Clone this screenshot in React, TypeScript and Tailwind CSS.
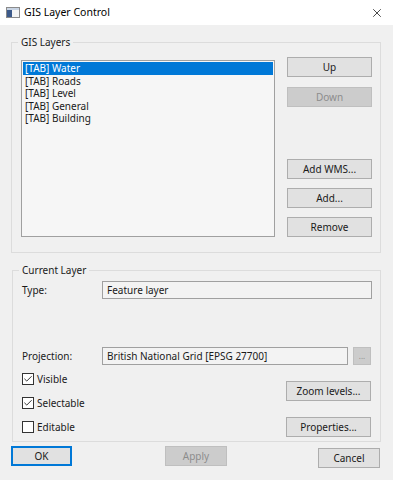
import { X, Check } from 'lucide-react'

const layers = ['[TAB] Water', '[TAB] Roads', '[TAB] Level', '[TAB] General', '[TAB] Building']

function Btn({ label, disabled, className = '' }: { label: string; disabled?: boolean; className?: string }) {
  return (
    <button
      className={`h-[20px] border text-[10px] leading-none ${
        disabled ? 'bg-[#cccccc] border-[#bfbfbf] text-[#8c8c8c]' : 'bg-[#e1e1e1] border-[#adadad] text-[#1a1a1a]'
      } ${className}`}
    >
      {label}
    </button>
  )
}

function CheckRow({ label, checked }: { label: string; checked?: boolean }) {
  return (
    <label className="flex items-center gap-[3px] h-[14px]">
      <span className="w-[12px] h-[12px] border border-[#333] bg-white flex items-center justify-center">
        {checked && <Check className="w-[10px] h-[10px] text-[#222]" strokeWidth={2.2} />}
      </span>
      <span>{label}</span>
    </label>
  )
}

export default function App() {
  return (
    <div className="w-[393px] h-[480px] bg-[#f0f0f0] text-[10px] text-[#1a1a1a] font-['Noto_Sans',sans-serif] overflow-hidden">
      {/* Title bar */}
      <div className="h-[25px] bg-white flex items-center pl-[6px] pr-[9px]">
        <svg width="14" height="11" viewBox="0 0 14 11" className="mr-[4px]">
          <rect x="0.5" y="0.5" width="13" height="10" fill="#f4f4f4" stroke="#8a8a8a" />
          <rect x="1" y="3" width="5" height="7" fill="#3d5a8a" />
          <rect x="1" y="1" width="12" height="2" fill="#c8d4e4" />
        </svg>
        <span className="text-[10.5px] text-black">GIS Layer Control</span>
        <X className="ml-auto w-[14px] h-[14px] text-[#222]" strokeWidth={1.4} />
      </div>

      <div className="px-[11px] pt-[10px]">
        {/* GIS Layers */}
        <fieldset className="w-[370px] h-[218px] border border-[#dcdcdc] pl-[9px] pr-[8px]">
          <legend className="ml-[-3px] px-[3px] leading-[14px]">GIS Layers</legend>
          <div className="flex gap-[12px] pt-[8px]">
            <div className="w-[254px] h-[177px] border border-[#a0a0a0] bg-[#f6f6f6] mt-[3px] pt-[1px] px-[1px]">
              {layers.map((l, i) => (
                <div
                  key={l}
                  className={`h-[12.5px] leading-[12.5px] px-[2px] ${i === 0 ? 'bg-[#0078d7] text-white' : ''}`}
                >
                  {l}
                </div>
              ))}
            </div>
            <div className="flex flex-col w-[85px]">
              <Btn label="Up" />
              <Btn label="Down" disabled className="mt-[10px]" />
              <Btn label="Add WMS..." className="mt-[52px]" />
              <Btn label="Add..." className="mt-[9px]" />
              <Btn label="Remove" className="mt-[9px]" />
            </div>
          </div>
        </fieldset>

        {/* Current Layer */}
        <fieldset className="w-[369px] h-[179px] mt-[10px] border border-[#dcdcdc] pl-[9px] pr-[8px] ml-[1px]">
          <legend className="ml-[-3px] px-[3px] leading-[14px]">Current Layer</legend>
          <div className="flex items-center pt-[4px]">
            <span className="w-[80px]">Type:</span>
            <div className="w-[270px] h-[18px] border border-[#a0a0a0] bg-[#f3f3f3] px-[4px] flex items-center">
              Feature layer
            </div>
          </div>
          <div className="flex items-center mt-[48px]">
            <span className="w-[80px]">Projection:</span>
            <div className="w-[246px] h-[18px] border border-[#a0a0a0] bg-[#f3f3f3] px-[4px] flex items-center">
              British National Grid [EPSG 27700]
            </div>
            <div className="ml-[5px] w-[18px] h-[18px] bg-[#cccccc] border border-[#bfbfbf] text-[#8c8c8c] text-[8px] flex items-center justify-center">
              ...
            </div>
          </div>
          <div className="flex mt-[6px]">
            <div className="flex flex-col gap-[10px] pt-[1px]">
              <CheckRow label="Visible" checked />
              <CheckRow label="Selectable" checked />
              <CheckRow label="Editable" />
            </div>
            <div className="ml-auto flex flex-col gap-[16px] pt-[10px] w-[85px] mr-[1px]">
              <Btn label="Zoom levels..." />
              <Btn label="Properties..." />
            </div>
          </div>
        </fieldset>

        {/* Footer buttons */}
        <div className="flex items-start mt-[4px]">
          <button className="w-[61px] h-[20px] border-2 border-[#0078d7] bg-[#e1e1e1] text-[10px] leading-none">OK</button>
          <button className="ml-[93px] w-[62px] h-[20px] border border-[#bfbfbf] bg-[#cccccc] text-[#8c8c8c] text-[10px] leading-none">
            Apply
          </button>
          <button className="ml-auto mr-[2px] mt-[2px] w-[62px] h-[20px] border border-[#adadad] bg-[#e1e1e1] text-[10px] leading-none">
            Cancel
          </button>
        </div>
      </div>
    </div>
  )
}
